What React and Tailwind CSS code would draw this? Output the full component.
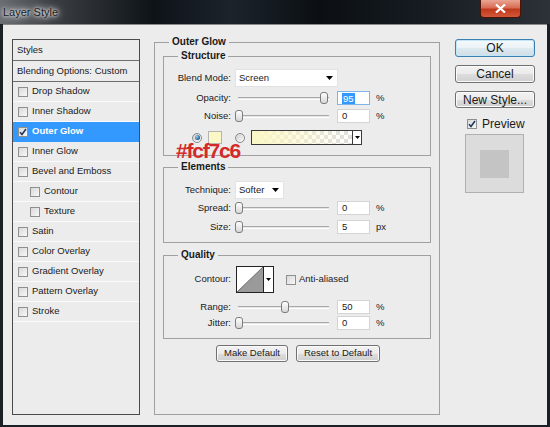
import React from "react";

const styles = [
  { label: "Drop Shadow" },
  { label: "Inner Shadow" },
  { label: "Outer Glow", checked: true, active: true },
  { label: "Inner Glow" },
  { label: "Bevel and Emboss" },
  { label: "Contour", sub: true },
  { label: "Texture", sub: true },
  { label: "Satin" },
  { label: "Color Overlay" },
  { label: "Gradient Overlay" },
  { label: "Pattern Overlay" },
  { label: "Stroke" },
];

const Check = ({ checked }) => (
  <span className="w-[10px] h-[10px] shrink-0 border border-[#8e8f8f] bg-[linear-gradient(135deg,#d8d8d8,#f8f8f8)] flex items-center justify-center">
    {checked && (
      <svg width="8" height="8" viewBox="0 0 8 8">
        <path d="M1 4.2 L3 6.5 L7 1" fill="none" stroke="#1e395b" strokeWidth="1.6" />
      </svg>
    )}
  </span>
);

const Radio = ({ checked }) => (
  <span className="w-[10px] h-[10px] shrink-0 rounded-full border border-[#8a8a8a] bg-[linear-gradient(135deg,#d0d0d0,#fafafa)] flex items-center justify-center">
    {checked && <span className="w-[5px] h-[5px] rounded-full bg-[radial-gradient(circle_at_35%_35%,#9fd2f5,#1b5a8e_70%)]" />}
  </span>
);

const Slider = ({ thumb }) => (
  <div className="relative w-[94px] h-[14px]">
    <div className="absolute left-[3px] right-0 top-[6px] h-[3px] border-t border-[#a9a9a9] border-b border-b-white bg-[#e4e4e4]" />
    <div className={`absolute top-[1px] w-[8px] h-[12px] rounded-[3px] border border-[#7c7c7c] bg-[linear-gradient(#ffffff,#d6d6d6)] ${thumb}`} />
  </div>
);

const Field = ({ value, unit, selected }) => (
  <>
    <div
      className={`ml-[8px] w-[33px] h-[14px] bg-white border flex items-center pl-[4px] ${
        selected ? "border-[#7eb4ea]" : "border-[#d4d4d4]"
      }`}
    >
      {selected ? <span className="bg-[#3399ff] text-white leading-[11px] px-[1px]">{value}</span> : value}
    </div>
    <span className="ml-[6px]">{unit}</span>
  </>
);

const Label = ({ children }) => <span className="w-[67px] mr-[4px] text-right shrink-0">{children}</span>;

const SliderRow = ({ label, thumb, value, unit, selected, className }) => (
  <div className={`flex items-center h-[14px] ${className}`}>
    <Label>{label}</Label>
    <Slider thumb={thumb} />
    <Field value={value} unit={unit} selected={selected} />
  </div>
);

const Caret = () => (
  <svg width="7" height="4" viewBox="0 0 7 4">
    <path d="M0 0 H7 L3.5 4 Z" fill="#000" />
  </svg>
);

const Btn = ({ children, className, primary }) => (
  <div
    className={`flex items-center justify-center rounded-[3px] border ${
      primary
        ? "border-[#3c7fb1] shadow-[inset_0_0_0_1px_#c4e5f6] bg-[linear-gradient(#f4f9fc_0%,#ebf3f8_50%,#dde9f0_51%,#cfdde6_100%)]"
        : "border-[#707070] shadow-[inset_0_0_0_1px_#fbfbfb] bg-[linear-gradient(#f2f2f2_0%,#ebebeb_50%,#dddddd_51%,#cfcfcf_100%)]"
    } ${className}`}
  >
    {children}
  </div>
);

const Box = ({ title, className, children }) => (
  <fieldset className={`border border-[#a0a0a0] mx-[8px] ${className}`}>
    <legend className="ml-[14px] px-[3px] font-bold text-[10px] leading-[14px]">{title}</legend>
    {children}
  </fieldset>
);

export default function App() {
  return (
    <div className="w-[550px] h-[427px] bg-[#1b2026] flex flex-col font-['Liberation_Sans',Arial,sans-serif] text-[9.5px] text-[#1a1a1a]">
      {/* title bar */}
      <div className="h-[24px] shrink-0 flex items-start bg-[linear-gradient(90deg,#6a6e73_0%,#3a3e43_10%,#0e1318_28%,#1c232b_42%,#0b0f13_58%,#161c22_78%,#2c3237_100%)]">
        <span className="ml-[3px] mt-[6px] text-[11px] leading-[13px] text-[#1b1b1b] [text-shadow:0_0_6px_#fff,0_0_3px_#fff,0_0_10px_#ddd]">
          Layer Style
        </span>
        <div className="ml-auto mr-[29px] w-[41px] h-[18px] rounded-b-[4px] border border-t-0 border-[#4a1408] bg-[linear-gradient(#e9a593_0%,#d86d55_45%,#c0391c_55%,#d4583a_100%)] flex items-center justify-center">
          <svg width="11" height="9" viewBox="0 0 11 9">
            <path d="M1 0.5 L10 8.5 M10 0.5 L1 8.5" stroke="#fff" strokeWidth="2.2" />
          </svg>
        </div>
      </div>

      {/* client area */}
      <div className="flex-1 mx-[3px] mb-[2px] bg-[#ececec] border-t border-[#8a8a8a] flex items-start pl-[9px] pt-[14px]">
        {/* styles list */}
        <div className="w-[128px] h-[376px] shrink-0 border border-[#4b4b4b]">
          <div className="h-[21px] border-b border-[#6e6e6e] flex items-center pl-[4px]">Styles</div>
          <div className="h-[21px] border-b border-[#6e6e6e] flex items-center pl-[4px]">Blending Options: Custom</div>
          {styles.map((s) => (
            <div
              key={s.label}
              className={`h-[20px] border-b flex items-center gap-[4px] ${s.sub ? "pl-[17px]" : "pl-[5px]"} ${
                s.active ? "bg-[#3399ff] text-white font-bold border-[#3399ff]" : "border-[#fbfbfb]"
              }`}
            >
              <Check checked={s.checked} />
              <span>{s.label}</span>
            </div>
          ))}
        </div>

        {/* main panel */}
        <fieldset className="ml-[14px] mt-[-4px] w-[286px] h-[380px] shrink-0 border border-[#a0a0a0]">
          <legend className="ml-[14px] px-[3px] font-bold text-[10px] leading-[14px]">Outer Glow</legend>

          <Box title="Structure" className="h-[107px]">
            <div className="flex items-center h-[18px] mt-[6px]">
              <Label>Blend Mode:</Label>
              <div className="w-[103px] h-[18px] bg-white border border-[#e2e2e2] flex items-center justify-between pl-[3px] pr-[4px]">
                <span>Screen</span>
                <Caret />
              </div>
            </div>
            <SliderRow label="Opacity:" thumb="left-[85px]" value="95" unit="%" selected className="mt-[4px]" />
            <SliderRow label="Noise:" thumb="left-[0px]" value="0" unit="%" className="mt-[4px]" />
            <div className="flex items-center h-[15px] mt-[7px] pl-[28px]">
              <Radio checked />
              <span className="ml-[6px] w-[14px] h-[13px] bg-[#fcf7c6] border border-[#b4b4b4]" />
              <span className="ml-[13px]">
                <Radio />
              </span>
              <div className="ml-[6px] w-[111px] h-[15px] border border-[#3a3a3a] flex">
                <div className="flex-1 bg-[linear-gradient(90deg,#fcf7c6,rgba(252,247,198,0)),repeating-conic-gradient(#dedede_0_25%,#ffffff_0_50%)] bg-[length:100%_100%,8px_8px]" />
                <div className="w-[9px] bg-white border-l border-[#3a3a3a] flex items-center justify-center">
                  <svg width="5" height="3" viewBox="0 0 5 3">
                    <path d="M0 0 H5 L2.5 3 Z" fill="#000" />
                  </svg>
                </div>
              </div>
            </div>
          </Box>

          <div className="relative h-0">
            <span className="absolute left-[21px] top-[-16px] text-[21px] leading-[22px] font-bold tracking-[-1.2px] text-[#d42a2a]">
              #fcf7c6
            </span>
          </div>

          <Box title="Elements" className="mt-[4px] h-[83px]">
            <div className="flex items-center h-[18px] mt-[7px]">
              <Label>Technique:</Label>
              <div className="w-[49px] h-[18px] bg-white border border-[#e2e2e2] flex items-center justify-between pl-[3px] pr-[4px]">
                <span>Softer</span>
                <Caret />
              </div>
            </div>
            <SliderRow label="Spread:" thumb="left-[0px]" value="0" unit="%" className="mt-[2px]" />
            <SliderRow label="Size:" thumb="left-[0px]" value="5" unit="px" className="mt-[5px]" />
          </Box>

          <Box title="Quality" className="mt-[5px] h-[91px]">
            <div className="flex items-center h-[27px] mt-[4px]">
              <Label>Contour:</Label>
              <div className="ml-[1px] w-[38px] h-[27px] border border-[#222] bg-white flex">
                <svg width="26" height="25" viewBox="0 0 26 25" className="block">
                  <path d="M0 25 L26 0 L26 25 Z" fill="#9a9a9a" />
                  <path d="M0 25 L26 0" stroke="#555" strokeWidth="0.8" />
                </svg>
                <div className="flex-1 border-l border-[#222] flex items-center justify-center">
                  <svg width="5" height="3" viewBox="0 0 5 3">
                    <path d="M0 0 H5 L2.5 3 Z" fill="#000" />
                  </svg>
                </div>
              </div>
              <span className="ml-[12px]">
                <Check />
              </span>
              <span className="ml-[3px]">Anti-aliased</span>
            </div>
            <SliderRow label="Range:" thumb="left-[46px]" value="50" unit="%" className="mt-[7px]" />
            <SliderRow label="Jitter:" thumb="left-[0px]" value="0" unit="%" className="mt-[2px]" />
          </Box>

          <div className="flex justify-center gap-[8px] mt-[6px] pl-[2px]">
            <Btn className="w-[72px] h-[17px]">Make Default</Btn>
            <Btn className="w-[84px] h-[17px]">Reset to Default</Btn>
          </div>
        </fieldset>

        {/* right column */}
        <div className="ml-[15px] w-[80px] flex flex-col text-[12px]">
          <Btn primary className="h-[18px]">OK</Btn>
          <Btn className="h-[18px] mt-[8px]">Cancel</Btn>
          <Btn className="h-[17px] mt-[8px]">New Style...</Btn>
          <div className="flex items-center gap-[5px] mt-[10px] ml-[12px] h-[11px]">
            <Check checked />
            <span>Preview</span>
          </div>
          <div className="mt-[5px] ml-[10px] w-[59px] h-[59px] border border-[#b0b0b0] bg-[#dcdcdc] flex items-center justify-center">
            <div className="w-[29px] h-[28px] bg-[#c4c4c4]" />
          </div>
        </div>
      </div>
    </div>
  );
}
